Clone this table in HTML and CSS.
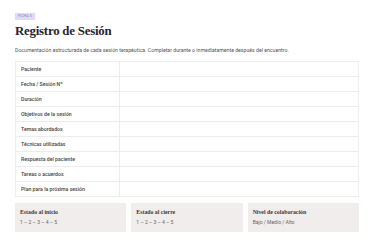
FILE: index.html
```html
<!DOCTYPE html>
<html lang="es">
<head>
<meta charset="utf-8">
<link rel="stylesheet" href="styles.css">
</head>
<body>
<main class="page">
  <div class="badge">FICHA 5</div>
  <h1 class="title">Registro de Sesión</h1>
  <p class="desc">Documentación estructurada de cada sesión terapéutica. Completar durante o inmediatamente después del encuentro.</p>
  <table class="sheet">
    <tr><th>Paciente</th><td></td></tr>
    <tr><th>Fecha / Sesión Nº</th><td></td></tr>
    <tr><th>Duración</th><td></td></tr>
    <tr><th>Objetivos de la sesión</th><td></td></tr>
    <tr><th>Temas abordados</th><td></td></tr>
    <tr><th>Técnicas utilizadas</th><td></td></tr>
    <tr><th>Respuesta del paciente</th><td></td></tr>
    <tr><th>Tareas o acuerdos</th><td></td></tr>
    <tr><th>Plan para la próxima sesión</th><td></td></tr>
  </table>
  <div class="cards">
    <div class="card"><div class="card-title">Estado al inicio</div><div class="card-value">1 – 2 – 3 – 4 – 5</div></div>
    <div class="card"><div class="card-title">Estado al cierre</div><div class="card-value">1 – 2 – 3 – 4 – 5</div></div>
    <div class="card"><div class="card-title">Nivel de colaboración</div><div class="card-value">Bajo / Medio / Alto</div></div>
  </div>
</main>
</body>
</html>
```

FILE: styles.css
```css
html, body {
  margin: 0;
  padding: 0;
  background: #ffffff;
}
.page {
  padding: 12.5px 16px 0 15px;
  font-family: Roboto, "Liberation Sans", sans-serif;
  color: #333;
}
.badge {
  width: fit-content;
  font-size: 3.6px;
  line-height: 7.5px;
  padding: 0 3px;
  background: #dcdcf7;
  color: #7f83c8;
  letter-spacing: 0.1px;
}
.title {
  margin: 4.3px 0 0 0;
  font-family: "Liberation Serif", serif;
  font-size: 12.8px;
  line-height: 15px;
  font-weight: 700;
  color: #1f2433;
  letter-spacing: -0.2px;
}
.desc {
  margin: 6.7px 0 0 0;
  font-size: 5.2px;
  line-height: 8px;
  color: #555;
}
.sheet {
  margin-top: 7.5px;
  width: 344px;
  border-collapse: collapse;
  border: 1px solid #efefef;
}
.sheet th,
.sheet td {
  height: 14px;
  padding: 0;
  border-bottom: 1px solid #ececec;
}
.sheet th {
  width: 98px;
  padding-left: 5px;
  text-align: left;
  font-size: 5.2px;
  font-weight: 500;
  color: #444;
  border-right: 1px solid #ececec;
}
.cards {
  margin-top: 5.5px;
  display: grid;
  grid-template-columns: repeat(3, 1fr);
  gap: 5px;
  width: 344px;
}
.card {
  background: #f0edec;
  height: 29px;
  padding: 6px 5px 0 5px;
  box-sizing: border-box;
}
.card-title {
  font-family: "Liberation Serif", serif;
  font-size: 5.8px;
  font-weight: 700;
  color: #3a3a3a;
  line-height: 7px;
}
.card-value {
  margin-top: 3px;
  font-size: 5px;
  color: #666;
  line-height: 7px;
}
```
